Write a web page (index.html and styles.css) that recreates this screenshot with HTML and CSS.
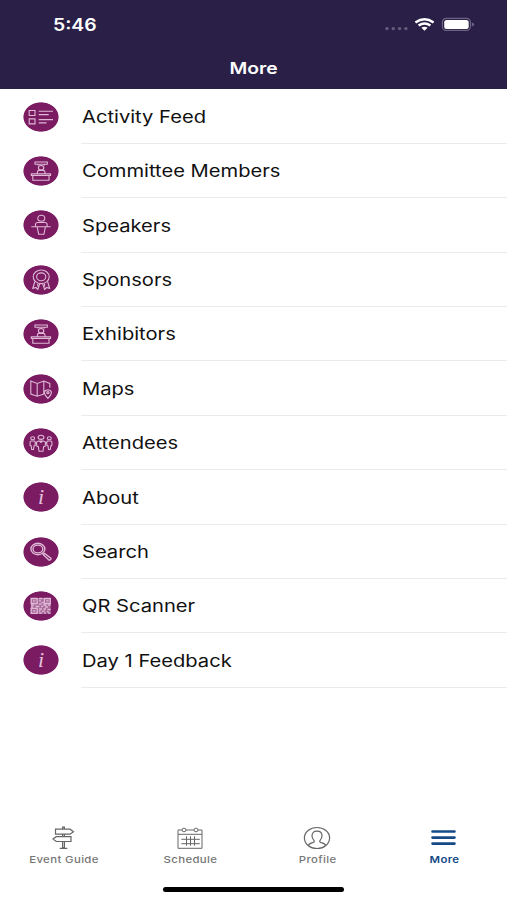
FILE: index.html
```html
<!DOCTYPE html>
<html lang="en">
<head>
    <meta charset="UTF-8">
    <title>More</title>
    <link rel="stylesheet" href="styles.css">
</head>
<body>
    <svg class="defs">
        <symbol id="booth" viewBox="0 0 36 30">
            <path d="M12 6h12.3v2.200H12zM14.400 17.500v-1.300q0-1.800 2-1.800h3.600q2 0 2 1.800v1.300M8.300 17.700h19.200v1.700H8.300zM9.800 19.500v4.800H26v-4.800M15 8.400v1M21.300 8.400v1"/>
            <ellipse cx="18.1" cy="11.8" rx="2.7" ry="2.3"/>
        </symbol>
    </svg>
    <div class="header">
        <div class="status">
            <span class="time">5:46</span>
            <svg class="signal" width="92" height="20" viewBox="0 0 92 20">
                <g fill="#675e7e">
                    <circle cx="4" cy="13.6" r="1.7"/><circle cx="10.3" cy="13.6" r="1.7"/><circle cx="16.6" cy="13.6" r="1.7"/><circle cx="22.9" cy="13.6" r="1.7"/>
                </g>
                <g fill="none" stroke="#fff" stroke-width="2.4">
                    <path d="M32.4 7.400q9.100-6.400 18.200 0M35.600 10.600q5.900-4.100 11.800 0"/>
                </g>
                <path d="M38.400 12.700q3.100-1.900 6.200 0l-3.100 3z" fill="#fff"/>
                <rect x="59.400" y="3.400" width="28" height="12" rx="3.800" fill="none" stroke="#6c6382" stroke-width="1.200"/>
                <rect x="61.200" y="4.900" width="24.500" height="9" rx="2.500" fill="#fff"/>
                <path d="M88.800 7.500q2.400.5 2.400 2t-2.400 2z" fill="#6c6382"/>
            </svg>
        </div>
        <div class="title"><span>More</span></div>
    </div>

    <ul class="list">
        <li>
            <svg class="icon" viewBox="0 0 36 30"><path d="M6.200 8.500h5.800v5H6.200zM6.200 16.900h5.800v5H6.200zM15.700 9.300H30M15.700 12.600h10M15.700 17.600H30M15.700 20.900h7.800"/></svg>
            <div class="name"><span>Activity Feed</span></div>
        </li>
        <li>
            <svg class="icon"><use href="#booth"/></svg>
            <div class="name"><span>Committee Members</span></div>
        </li>
        <li>
            <svg class="icon" viewBox="0 0 36 30"><ellipse cx="18.300" cy="8.200" rx="3.500" ry="3"/><path d="M12.500 16.500v-2q0-2 2.200-2h7.200q2.200 0 2.200 2v2M8.300 16.800h19.400M14.200 17l1.500 7.200h5.200l1.500-7.200"/></svg>
            <div class="name"><span>Speakers</span></div>
        </li>
        <li>
            <svg class="icon" viewBox="0 0 36 30"><ellipse cx="18.200" cy="11.800" rx="8" ry="6.800"/><ellipse cx="18.200" cy="11.800" rx="4.600" ry="3.900"/><path d="M11.800 16.500l-2 7 3.100-1 1.900 2 1.900-5.600M24.600 16.500l2 7-3.100-1-1.900 2-1.900-5.600M14.800 18.500v3M21.600 18.500v3"/></svg>
            <div class="name"><span>Sponsors</span></div>
        </li>
        <li>
            <svg class="icon"><use href="#booth"/></svg>
            <div class="name"><span>Exhibitors</span></div>
        </li>
        <li>
            <svg class="icon" viewBox="0 0 36 30"><path d="M21 20l-6.800 2.200L7.800 20V7l6.400 2.400L20.800 7l6 2.400v4.400M14.200 9.400v12.800M20.800 7v13M24.900 24.400q-3.500-4-3.500-6t3.500-2.600q3.500.6 3.500 2.600t-3.500 6z"/><ellipse cx="24.900" cy="18.600" rx="1.200" ry="1"/></svg>
            <div class="name"><span>Maps</span></div>
        </li>
        <li>
            <svg class="icon" viewBox="0 0 36 30"><ellipse cx="18" cy="9.300" rx="2.900" ry="2.100"/><ellipse cx="9.700" cy="10.200" rx="2" ry="1.500"/><ellipse cx="26.300" cy="10.200" rx="2" ry="1.500"/><path d="M15.500 13h5l2.200 1.200-.6 4.200-1.500.3-.6 4.600h-4l-.6-4.600-1.500-.3-.6-4.200zM16.500 13l1.500 1.500 1.500-1.500M8 13h3.500l.7 1v3.500l-1.200.5-.5 3.500H8.700L8.200 18l-1.100-.5V14zM24.500 13H28l.9 1v3.500l-1.100.5-.5 3.500h-1.800L25 18l-1.200-.5V14z"/></svg>
            <div class="name"><span>Attendees</span></div>
        </li>
        <li>
            <div class="icon info">i</div>
            <div class="name"><span>About</span></div>
        </li>
        <li>
            <svg class="icon search" viewBox="0 0 36 30"><ellipse cx="14.900" cy="12" rx="7" ry="5.700"/><ellipse cx="14.900" cy="12" rx="4.900" ry="3.900"/><path d="M19.500 16.200l1.500 1.300M21.800 16.500l6 4.600q.7 1.300-1 1.900-.8.100-1.400-.4l-5-4.800z"/></svg>
            <div class="name"><span>Search</span></div>
        </li>
        <li>
            <svg class="icon qr" viewBox="0 0 36 30">
                <path class="bg" d="M7.700 7h20v15.700h-20z"/>
                <path d="M8.200 7.500h6v5h-6zM21.300 7.500h6v5h-6zM8.200 17.300h6v5h-6z"/>
                <path d="M10 9.900h2.400M23.200 9.900h2.400M10 19.800h2.400M8 14h3M12.500 15.500h4M16 7.500h3.500M16 9.800h2M18.500 11.500h2M16 13h2.500M20 14h3.500M25 14h2.500M8 16h2M18 15.500h2M22 16h3M16 18h3M20.500 18h2.500M24.500 18.500h3M16 20h1.500M19 20.200h3M24 20.700h1.500M15.800 22.200h3.500M21 22.200h2M25 22.200h2.500"/>
            </svg>
            <div class="name"><span>QR Scanner</span></div>
        </li>
        <li>
            <div class="icon info">i</div>
            <div class="name"><span>Day 1 Feedback</span></div>
        </li>
    </ul>

    <div class="tabs">
        <a>
            <svg width="30" height="24" viewBox="0 0 30 24"><path d="M7.500 3.200H22l3.500 2.500L22 8.200H7.500zM23 10.700H8.200l-3.200 2.400 3.200 2.400H23zM14.600 1.200h1.800v2h-1.800zM14.600 8.200h1.800v2.500h-1.800zM14.600 15.500h1.800v6h-1.800zM11.700 22.300h7.600"/></svg>
            <span>Event Guide</span>
        </a>
        <a>
            <svg class="thin" width="30" height="24" viewBox="0 0 30 24"><path d="M7 4H3v18.300h24V4h-4M11 4h8M3 8.300h24M6.300 13.300h18.500M6.300 17.700h18.500M11.500 10.200v9.500M15.500 10.200v9.500M19.500 10.200v9.500"/><ellipse cx="9" cy="4" rx="2" ry="1.800"/><ellipse cx="21" cy="4" rx="2" ry="1.800"/></svg>
            <span>Schedule</span>
        </a>
        <a>
            <svg width="30" height="24" viewBox="0 0 30 24"><ellipse cx="15" cy="12" rx="12.600" ry="10.500"/><path d="M6.500 19.300q.6-1.700 4.300-2.600 2.200-.6 1.100-2.400-1.900-1.900-1.900-4.500 0-4.600 5-4.600t5 4.600q0 2.600-1.900 4.500-1.100 1.800 1.100 2.400 3.700.9 4.300 2.600"/></svg>
            <span>Profile</span>
        </a>
        <a class="active">
            <svg width="30" height="24" viewBox="0 0 30 24"><path d="M3.500 5.500h22M3.500 11.600h22M3.500 17.600h22"/></svg>
            <span>More</span>
        </a>
    </div>
    <div class="home"></div>
</body>
</html>
```
FILE: styles.css
```css
* {
    margin: 0;
    padding: 0;
    list-style: none;
    box-sizing: border-box;
}
body{
    width: 507px;
    height: 900px;
    overflow: hidden;
    background: #fff;
    font-family: Inter, "Liberation Sans", sans-serif;
    display: flex;
    flex-direction: column;
}
.defs{
    display: none;
}
.header{
    height: 89.4px;
    flex: none;
    background: #2a1f47;
    color: #fff;
}
.status{
    height: 48px;
    padding: 1px 32px 0 53px;
    display: flex;
    justify-content: space-between;
    align-items: center;
}
.time{
    font-size: 17px;
    font-weight: 600;
    transform: scaleX(1.14);
    transform-origin: left;
}
.title{
    height: 40px;
    line-height: 40px;
    text-align: center;
    font-size: 16.5px;
    font-weight: 600;
}
.title span{
    display: inline-block;
    margin-left: 1px;
    transform: scaleX(1.17);
}
.list li{
    height: 54.4px;
    padding-left: 23px;
    display: flex;
    align-items: center;
}
.icon{
    width: 36px;
    height: 30px;
    flex: none;
    background: radial-gradient(closest-side, #7b1b62 95%, transparent 100%);
    fill: none;
    stroke: #dfb9d6;
    stroke-width: 1.1;
}
.search{
    stroke-width: 1.4;
}
.qr{
    stroke-width: 1.3;
}
.qr .bg{
    fill: #a9689a;
    stroke: none;
}
.info{
    color: #e3c2db;
    font: italic 22px/30px "Liberation Serif", serif;
    text-align: center;
}
.name{
    height: 100%;
    flex: 1;
    margin-left: 22px;
    padding-top: 1.6px;
    border-bottom: 1px solid #ebebeb;
    display: flex;
    align-items: center;
    color: #111;
    font-size: 17px;
}
.name span{
    margin-left: .6px;
    transform: scaleX(1.185);
    transform-origin: left;
}
.tabs{
    margin-top: auto;
    height: 75px;
    padding-top: 1px;
    display: flex;
}
.tabs a{
    flex: 1;
    display: flex;
    flex-direction: column;
    align-items: center;
    color: #777;
    font-size: 9.5px;
    font-weight: 500;
}
.tabs svg{
    fill: none;
    stroke: #666;
    stroke-width: 1.2;
}
.tabs .thin{
    stroke-width: 1;
}
.tabs span{
    margin: 4px 0 0 1px;
    line-height: 12px;
    letter-spacing: .3px;
    transform: scaleX(1.2);
}
.tabs .active{
    color: #164a86;
    font-weight: 600;
}
.tabs .active svg{
    stroke: #164a86;
    stroke-width: 2.6;
    stroke-linecap: round;
}
.home{
    width: 181px;
    height: 5px;
    margin: -13px auto 8px;
    border-radius: 3px;
    background: #000;
}
```
